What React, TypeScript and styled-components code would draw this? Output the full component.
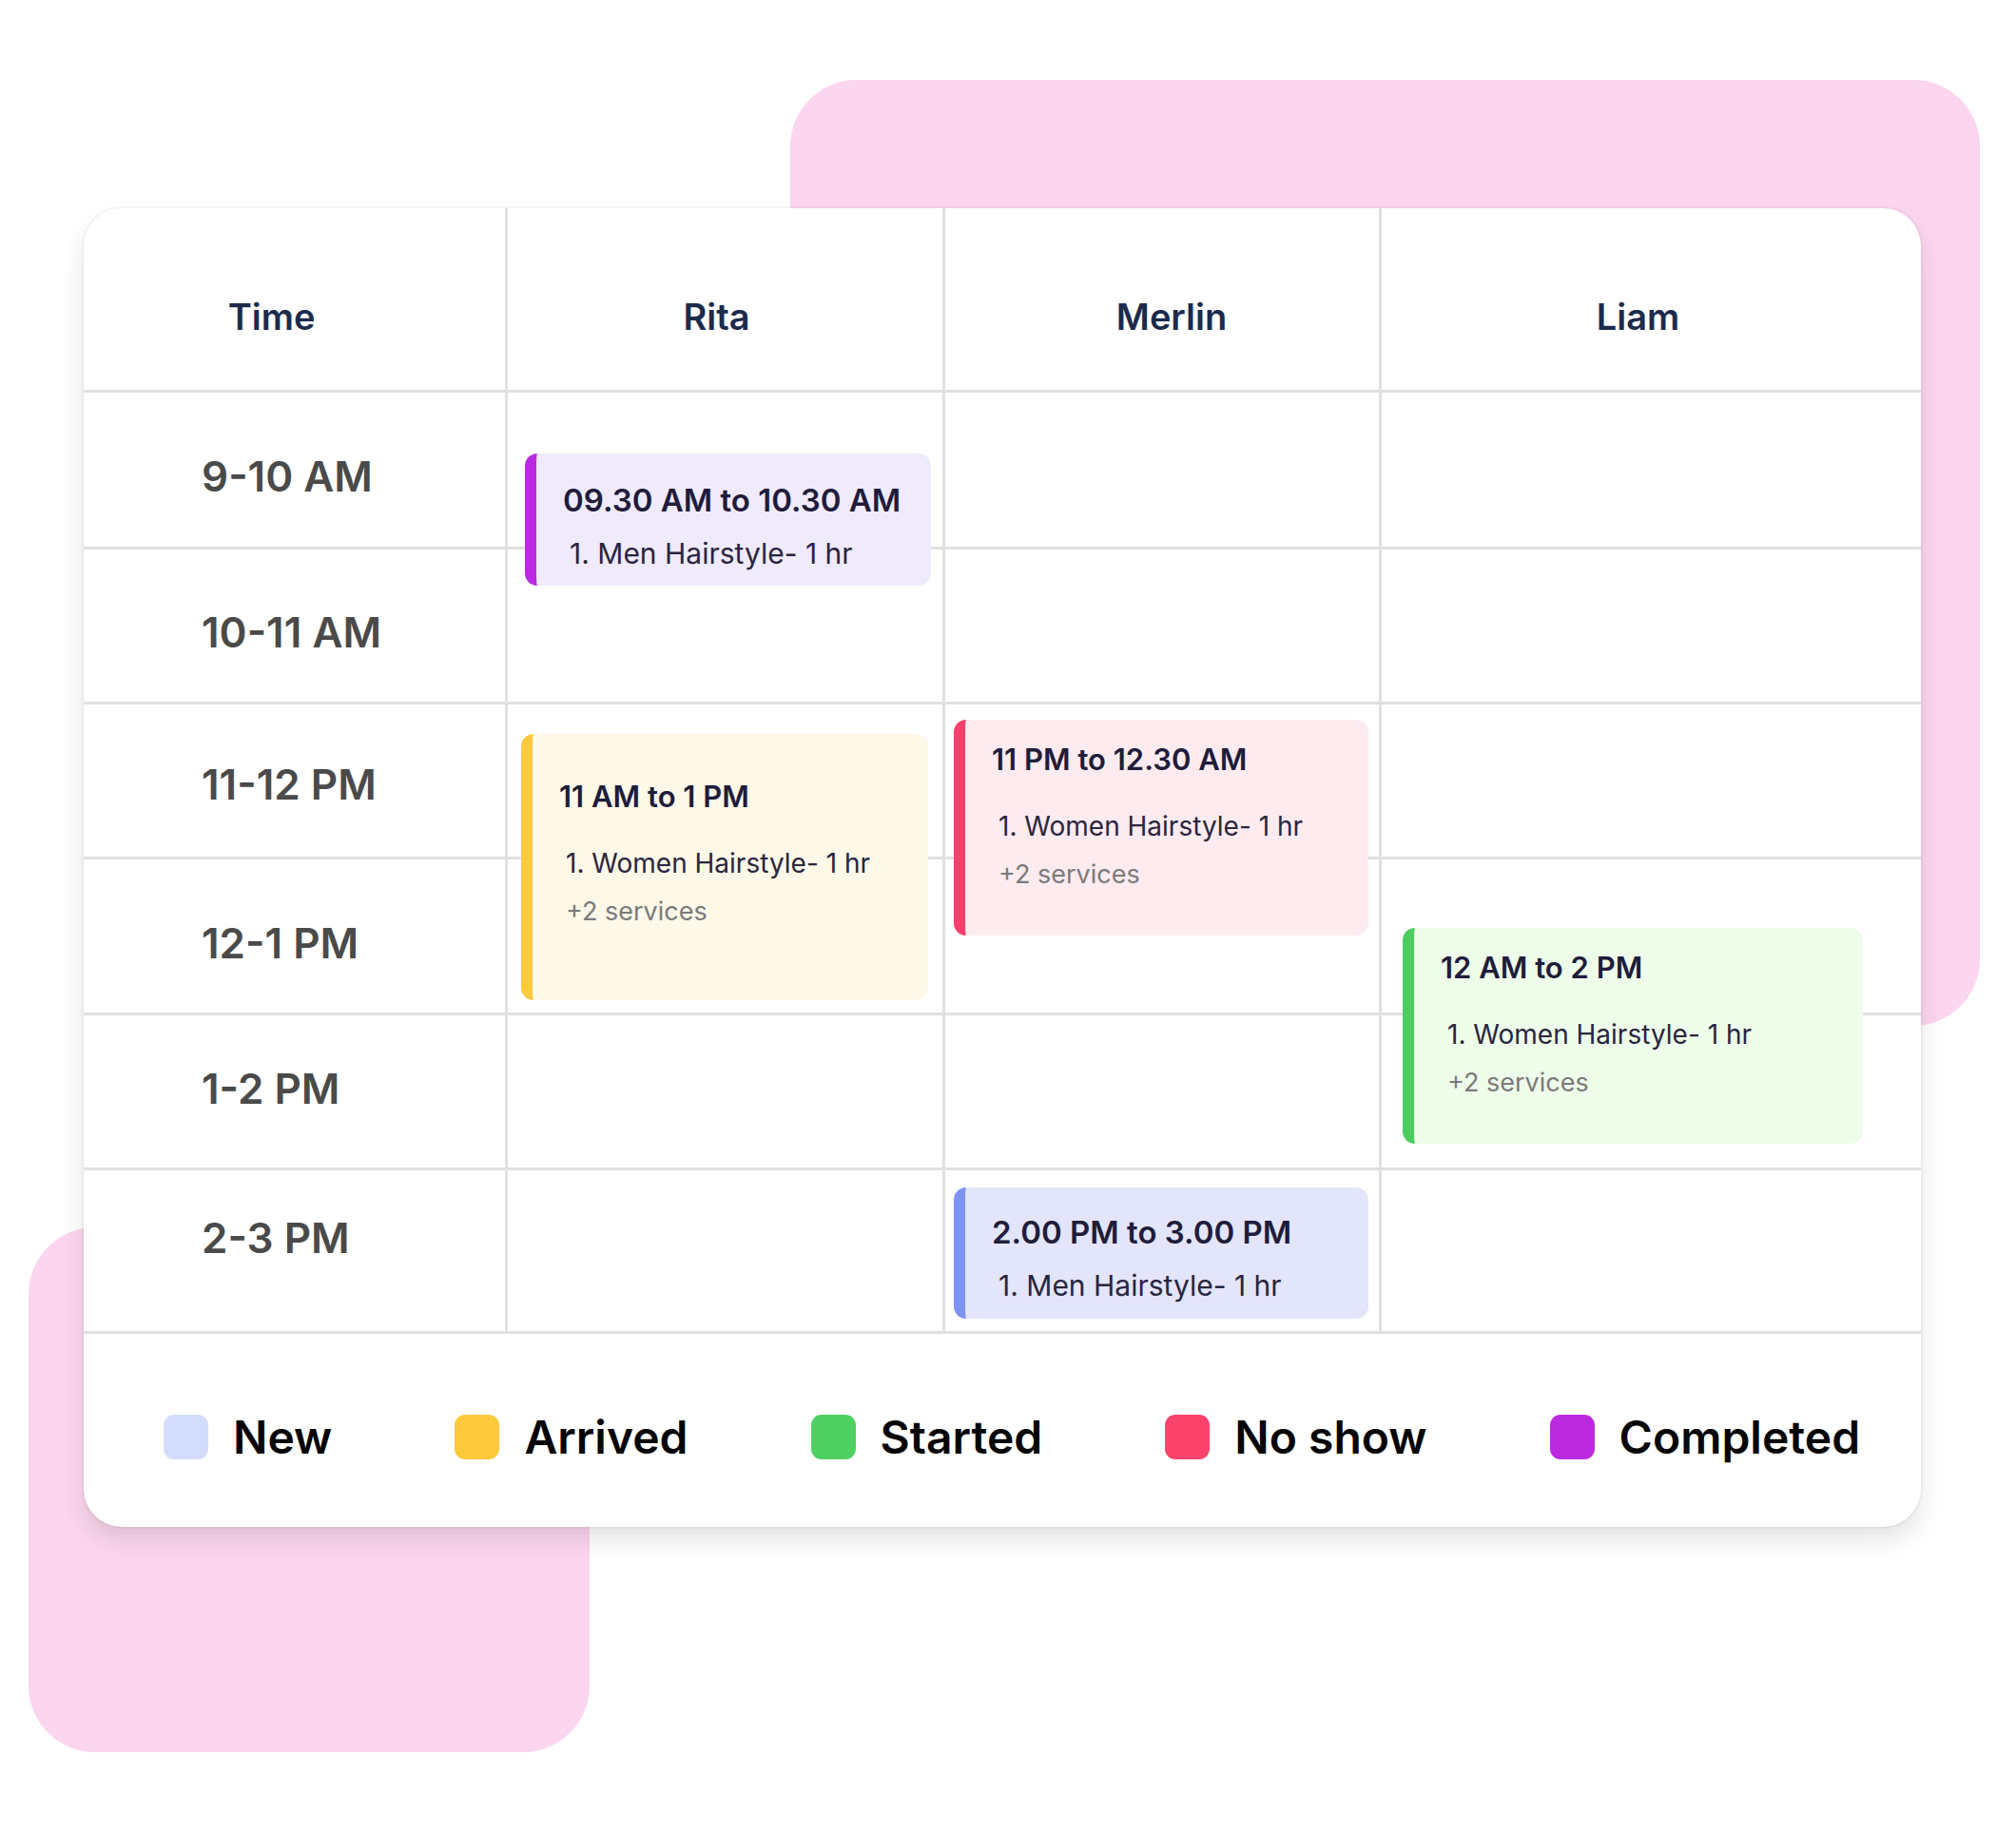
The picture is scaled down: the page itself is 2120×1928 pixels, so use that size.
import React from 'react'
import styled, { createGlobalStyle } from 'styled-components'

const GlobalStyle = createGlobalStyle`
  html, body {
    margin: 0;
    padding: 0;
    background: #ffffff;
  }
  body {
    font-family: Inter, "Noto Sans", "Liberation Sans", sans-serif;
    -webkit-font-smoothing: antialiased;
  }
  * { box-sizing: border-box; }
`

const colors = {
    line: '#e0e0e0',
    pink: '#fcd6ee',
    header: '#1c2b4d',
    time: '#4a4a4a',
    ink: '#201c3b',
    muted: '#7a7a7a',
}

const status = {
    new: { strip: '#7c93f1', fill: '#e3e5fc', swatch: '#d3dcfc' },
    arrived: { strip: '#fdca3e', fill: '#fdf8e7', swatch: '#fdca3e' },
    started: { strip: '#4dcc60', fill: '#eefde9', swatch: '#4fd063' },
    noShow: { strip: '#f5406b', fill: '#fdebf0', swatch: '#fb436b' },
    completed: { strip: '#ba2ae0', fill: '#f0eafd', swatch: '#bc2adf' },
}

type StatusKey = keyof typeof status

const Stage = styled.div`
    position: relative;
    width: 2120px;
    height: 1928px;
    overflow: hidden;
    background: #ffffff;
    padding-top: 219px;
    padding-left: 88px;
`

// decorative pink shapes sitting behind the card
const Blob = styled.div<{ $x: number; $y: number; $w: number; $h: number }>`
    position: absolute;
    left: ${p => p.$x}px;
    top: ${p => p.$y}px;
    width: ${p => p.$w}px;
    height: ${p => p.$h}px;
    background: ${colors.pink};
    border-radius: 70px;
    z-index: 0;
`

const Card = styled.section`
    position: relative;
    z-index: 1;
    width: 1932px;
    background: #ffffff;
    border-radius: 40px;
    overflow: hidden;
    box-shadow: 0 0 0 2px rgba(0, 0, 0, 0.03), 0 14px 26px rgba(0, 0, 0, 0.11);
`

const Schedule = styled.div`
    display: grid;
    grid-template-columns: 446px 460px 459px 567px;
`

const Column = styled.div<{ $last?: boolean }>`
    display: flex;
    flex-direction: column;
    border-right: ${p => (p.$last ? 'none' : `3px solid ${colors.line}`)};
`

const HeaderCell = styled.div<{ $shift: number }>`
    height: 194px;
    display: flex;
    align-items: center;
    justify-content: center;
    padding-top: 36px;
    padding-left: ${p => (p.$shift > 0 ? p.$shift * 2 : 0)}px;
    padding-right: ${p => (p.$shift < 0 ? -p.$shift * 2 : 0)}px;
    border-bottom: 3px solid ${colors.line};
    font-size: 38px;
    font-weight: 600;
    color: ${colors.header};
`

const ColumnBody = styled.div`
    position: relative;
    display: flex;
    flex-direction: column;
`

const Slot = styled.div<{ $h: number }>`
    height: ${p => p.$h}px;
    border-bottom: 3px solid ${colors.line};
`

const TimeSlot = styled(Slot)<{ $top: number }>`
    padding-left: 124px;
    padding-top: ${p => p.$top}px;
    font-size: 44px;
    line-height: 54px;
    font-weight: 600;
    color: ${colors.time};
`

const Booking = styled.div<{ $kind: StatusKey; $x: number; $y: number; $w: number; $h: number; $pad: number }>`
    position: absolute;
    left: ${p => p.$x}px;
    top: ${p => p.$y}px;
    width: ${p => p.$w}px;
    height: ${p => p.$h}px;
    padding: ${p => p.$pad}px 20px 0 28px;
    background: ${p => status[p.$kind].fill};
    border-left: 12px solid ${p => status[p.$kind].strip};
    border-radius: 13px;
    display: flex;
    flex-direction: column;
`

const BookingTitle = styled.div<{ $compact: boolean }>`
    font-size: ${p => (p.$compact ? 31 : 33)}px;
    line-height: 40px;
    font-weight: 600;
    color: ${colors.ink};
    white-space: nowrap;
`

const BookingService = styled.div<{ $compact: boolean }>`
    margin-top: ${p => (p.$compact ? 32 : 18)}px;
    margin-left: 7px;
    font-size: ${p => (p.$compact ? 28 : 30)}px;
    line-height: 36px;
    color: #29253f;
    white-space: nowrap;
`

const BookingMore = styled.div`
    margin-top: 15px;
    margin-left: 7px;
    font-size: 27px;
    line-height: 36px;
    color: ${colors.muted};
`

const Legend = styled.div`
    height: 203px;
    display: flex;
    align-items: center;
    gap: 129px;
    padding: 14px 0 0 84px;
`

const LegendItem = styled.div`
    display: flex;
    align-items: center;
    gap: 26px;
`

const Swatch = styled.span<{ $kind: StatusKey }>`
    width: 47px;
    height: 47px;
    border-radius: 11px;
    background: ${p => status[p.$kind].swatch};
`

const LegendLabel = styled.span`
    font-size: 48px;
    line-height: 58px;
    font-weight: 600;
    color: #050505;
`

const rows = [
    { label: '9-10 AM', h: 165, top: 61 },
    { label: '10-11 AM', h: 163, top: 60 },
    { label: '11-12 PM', h: 163, top: 57 },
    { label: '12-1 PM', h: 164, top: 61 },
    { label: '1-2 PM', h: 163, top: 50 },
    { label: '2-3 PM', h: 172, top: 44 },
]

type Appointment = {
    kind: StatusKey
    title: string
    service: string
    more?: string
    x: number
    y: number
    w: number
    h: number
    pad: number
}

const staff: { name: string; shift: number; bookings: Appointment[] }[] = [
    {
        name: 'Rita',
        shift: -9,
        bookings: [
            { kind: 'completed', title: '09.30 AM to 10.30 AM', service: '1. Men Hairstyle- 1 hr', x: 18, y: 64, w: 427, h: 139, pad: 29 },
            { kind: 'arrived', title: '11 AM to 1 PM', service: '1. Women Hairstyle- 1 hr', more: '+2 services', x: 14, y: 359, w: 428, h: 280, pad: 46 },
        ],
    },
    {
        name: 'Merlin',
        shift: 10,
        bookings: [
            { kind: 'noShow', title: '11 PM to 12.30 AM', service: '1. Women Hairstyle- 1 hr', more: '+2 services', x: 9, y: 344, w: 436, h: 227, pad: 22 },
            { kind: 'new', title: '2.00 PM to 3.00 PM', service: '1. Men Hairstyle- 1 hr', x: 9, y: 836, w: 436, h: 138, pad: 27 },
        ],
    },
    {
        name: 'Liam',
        shift: -14,
        bookings: [
            { kind: 'started', title: '12 AM to 2 PM', service: '1. Women Hairstyle- 1 hr', more: '+2 services', x: 22, y: 563, w: 484, h: 227, pad: 22 },
        ],
    },
]

const legend: { kind: StatusKey; label: string }[] = [
    { kind: 'new', label: 'New' },
    { kind: 'arrived', label: 'Arrived' },
    { kind: 'started', label: 'Started' },
    { kind: 'noShow', label: 'No show' },
    { kind: 'completed', label: 'Completed' },
]

const App = () => {
    return (
        <>
            <GlobalStyle />
            <Stage>
                <Blob $x={831} $y={84} $w={1251} $h={995} />
                <Blob $x={30} $y={1291} $w={590} $h={552} />
                <Card>
                    <Schedule>
                        <Column>
                            <HeaderCell $shift={-24}>Time</HeaderCell>
                            {rows.map(r => (
                                <TimeSlot key={r.label} $h={r.h} $top={r.top}>{r.label}</TimeSlot>
                            ))}
                        </Column>
                        {staff.map((s, i) => (
                            <Column key={s.name} $last={i === staff.length - 1}>
                                <HeaderCell $shift={s.shift}>{s.name}</HeaderCell>
                                <ColumnBody>
                                    {rows.map(r => <Slot key={r.label} $h={r.h} />)}
                                    {s.bookings.map(b => (
                                        <Booking key={b.title} $kind={b.kind} $x={b.x} $y={b.y} $w={b.w} $h={b.h} $pad={b.pad}>
                                            <BookingTitle $compact={!!b.more}>{b.title}</BookingTitle>
                                            <BookingService $compact={!!b.more}>{b.service}</BookingService>
                                            {b.more && <BookingMore>{b.more}</BookingMore>}
                                        </Booking>
                                    ))}
                                </ColumnBody>
                            </Column>
                        ))}
                    </Schedule>
                    <Legend>
                        {legend.map(l => (
                            <LegendItem key={l.kind}>
                                <Swatch $kind={l.kind} />
                                <LegendLabel>{l.label}</LegendLabel>
                            </LegendItem>
                        ))}
                    </Legend>
                </Card>
            </Stage>
        </>
    )
}

export default App
